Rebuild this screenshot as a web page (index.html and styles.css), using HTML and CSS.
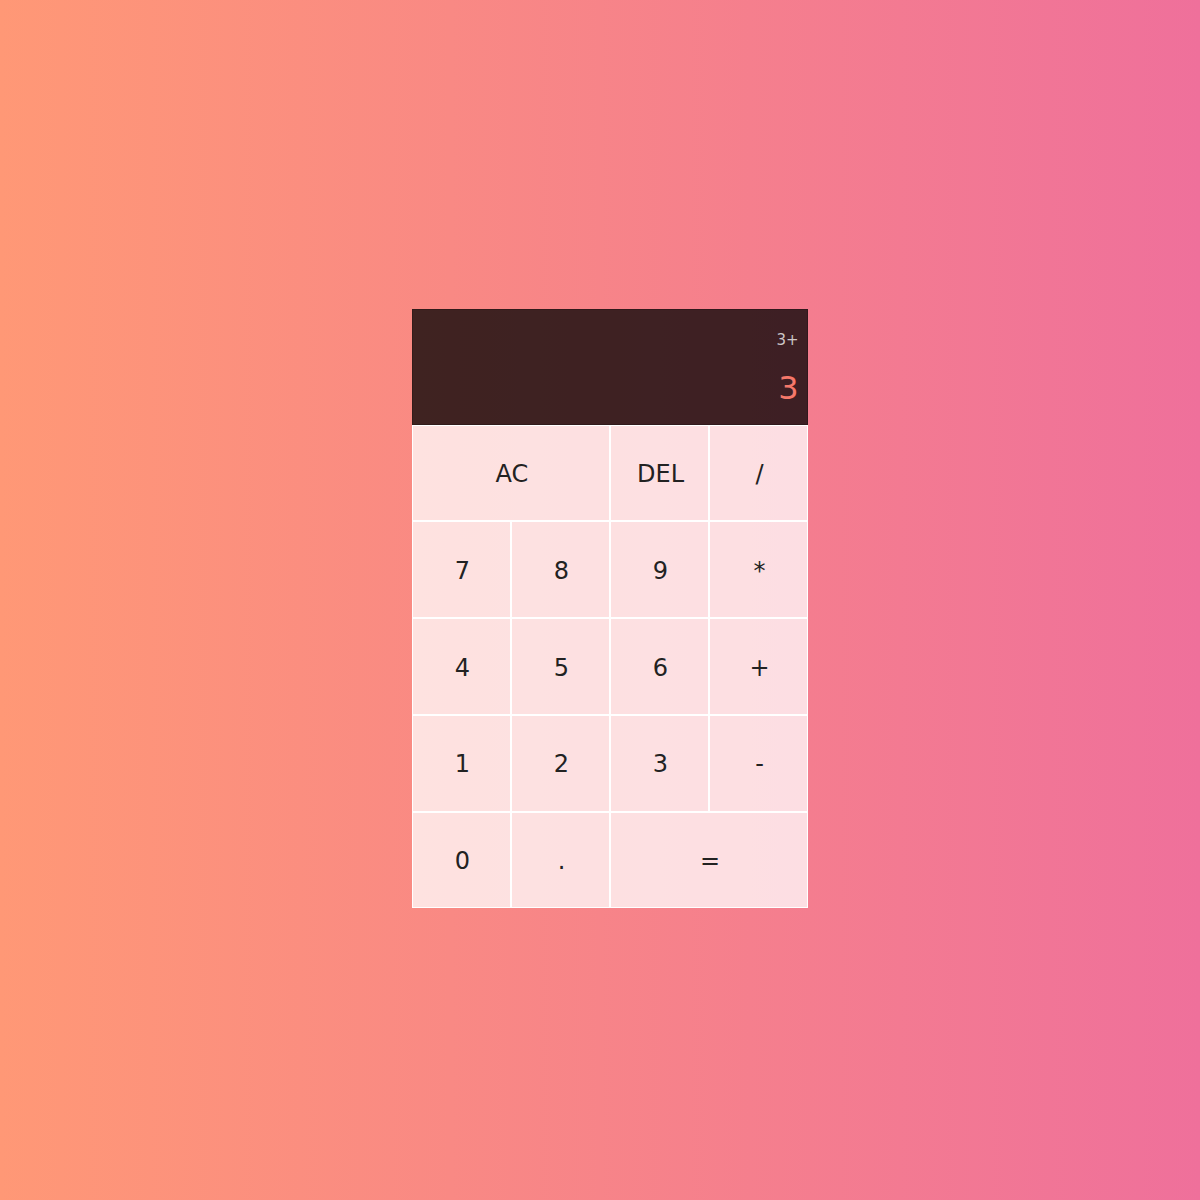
FILE: index.html
```html
<!DOCTYPE html>
<html>
<head>
<meta charset="utf-8">
<link rel="stylesheet" href="styles.css">
</head>
<body>
<div class="calculator">
  <div class="output">
    <div class="previous">3+</div>
    <div class="current">3</div>
  </div>
  <button class="span-two">AC</button>
  <button>DEL</button>
  <button>/</button>
  <button>7</button>
  <button>8</button>
  <button>9</button>
  <button>*</button>
  <button>4</button>
  <button>5</button>
  <button>6</button>
  <button>+</button>
  <button>1</button>
  <button>2</button>
  <button>3</button>
  <button>-</button>
  <button>0</button>
  <button>.</button>
  <button class="span-two">=</button>
</div>
</body>
</html>
```
FILE: styles.css
```css
* { box-sizing: border-box; }
html, body { margin: 0; }
body {
  min-height: 100vh;
  padding: 17px 0 0 19px;
  background: linear-gradient(to right, #ff9876, #ef709b);
  font-family: "DejaVu Sans", Verdana, sans-serif;
  display: flex;
  justify-content: center;
  align-items: center;
}
.calculator {
  display: grid;
  grid-template-columns: repeat(4, 99px);
  grid-template-rows: 116px repeat(5, 96.7px);
}
.calculator button {
  font-family: inherit;
  font-size: 24px;
  color: #222;
  border: 1px solid #fff;
  background: rgba(255, 255, 255, 0.75);
  outline: none;
  padding: 2px 0 0 3px;
  cursor: pointer;
}
.span-two { grid-column: span 2; }
.output {
  grid-column: 1 / -1;
  background: rgba(0, 0, 0, 0.75);
  border: 1px solid rgba(0, 0, 0, 0.2);
  display: flex;
  flex-direction: column;
  align-items: flex-end;
  padding: 20px 8px 0 10px;
}
.previous {
  color: rgba(255, 255, 255, 0.75);
  font-size: 15px;
  line-height: 20px;
}
.current {
  color: #f5786a;
  font-size: 32px;
  line-height: 38px;
  margin-top: 19px;
}
```
